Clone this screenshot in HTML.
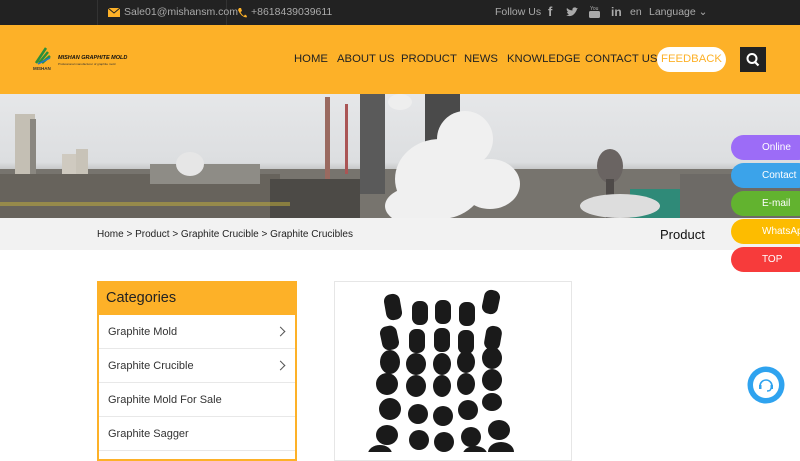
<!DOCTYPE html>
<html><head><meta charset="utf-8"><style>
*{margin:0;padding:0;box-sizing:border-box}
body{width:800px;height:450px;overflow:hidden;font-family:"Liberation Sans",Arial,sans-serif;background:#fff;position:relative}
.top{position:absolute;left:0;top:0;width:800px;height:25px;background:#222;color:#aaa;font-size:10.5px}
.top span{position:absolute;top:6px;white-space:nowrap}
.hdr{position:absolute;left:0;top:25px;width:800px;height:69px;background:#fdb128}
.nav{position:absolute;top:28px;font-size:11.3px;color:#222;white-space:nowrap}
.fb{position:absolute;left:657px;top:22px;width:69px;height:25px;border-radius:13px;background:#fff;color:#fdb128;font-size:11.3px;text-align:center;line-height:25px}
.srch{position:absolute;left:740px;top:22px;width:26px;height:25px;background:#222}
.banner{position:absolute;left:0;top:94px;width:800px;height:124px;overflow:hidden;background:linear-gradient(#e6e7e9,#dcdee0 55%,#9a9b98 72%,#6a6862)}
.bc{position:absolute;left:0;top:218px;width:800px;height:32px;background:#f2f2f2}
.cat{position:absolute;left:97px;top:281px;width:200px;height:180px;border:2px solid #fdb128;border-top:none}
.cat .h{height:34px;background:#fdb128;font-size:14.5px;color:#222;padding:9px 0 0 9px;margin:0 -2px}
.cat .i{height:34px;border-bottom:1px solid #e8e8e8;font-size:11px;color:#333;padding:11px 0 0 9px;position:relative}
.cat .i b{position:absolute;right:11px;top:13px;width:7px;height:7px;border-right:1px solid #555;border-top:1px solid #555;transform:rotate(45deg)}
.pic{position:absolute;left:334px;top:281px;width:238px;height:180px;border:1px solid #e6e6e6}
.fl{position:absolute;left:731px;width:80px;height:25px;border-radius:13px;color:#fff;font-size:10px;line-height:25px;padding-left:31px}
</style></head><body>
<div class="top">
<div style="position:absolute;left:97px;top:0;width:1px;height:25px;background:#333"></div>
<div style="position:absolute;left:226px;top:0;width:1px;height:25px;background:#333"></div>
<svg style="position:absolute;left:108px;top:8px" width="12" height="9"><rect width="12" height="9" fill="#fdb128"/><path d="M0 0L6 5L12 0" stroke="#222" fill="none"/></svg>
<span style="left:124px">Sale01@mishansm.com</span>
<svg style="position:absolute;left:237px;top:7px" width="10" height="11"><path d="M2 1L4 1L5 4L3.5 5Q5 8 7 9L8 7.5L10 9L9.5 10.5Q4 10 1 3Z" fill="#fdb128"/></svg>
<span style="left:251px">+8618439039611</span>
<span style="left:495px">Follow Us</span>
<span style="left:548px;font-weight:bold;font-size:13px;top:4px">f</span>
<svg style="position:absolute;left:566px;top:7px" width="12" height="10"><path d="M0 8Q5 11 9 6Q11 3 11 2L12 1L10.5 1.3Q10 0 8 0.5Q6 1 6.5 3.5Q3 3.3 1 1Q0 3 2 5L1 5Q1.5 7 3 7.5Q2 8.3 0 8Z" fill="#aaa"/></svg>
<svg style="position:absolute;left:589px;top:5px" width="11" height="14"><text x="1" y="5" font-size="5" fill="#aaa" font-family="Liberation Sans">You</text><rect x="0" y="6" width="11" height="7" rx="1.5" fill="#aaa"/></svg>
<span style="left:611px;font-weight:bold;font-size:12px;top:5px">in</span>
<span style="left:630px">en</span>
<span style="left:649px">Language ⌄</span>
</div>
<div class="hdr">
<svg style="position:absolute;left:33px;top:20px" width="22" height="26"><path d="M3 18L13 3M6 18L15 7M9 18L17 11" stroke="#2b8f3a" stroke-width="2.5"/><path d="M5 19L17 13" stroke="#2277cc" stroke-width="1.5"/><text x="0" y="25" font-size="4.5" fill="#333" font-family="Liberation Sans" font-weight="bold">MISHAN</text></svg>
<div style="position:absolute;left:58px;top:30px;font-size:5.5px;font-weight:bold;font-style:italic;color:#111;white-space:nowrap">MISHAN GRAPHITE MOLD</div>
<div style="position:absolute;left:58px;top:37px;font-size:3px;color:#333;white-space:nowrap">Professional manufacturer of graphite mold</div>
<span class="nav" style="left:294px">HOME</span>
<span class="nav" style="left:337px">ABOUT US</span>
<span class="nav" style="left:401px">PRODUCT</span>
<span class="nav" style="left:464px">NEWS</span>
<span class="nav" style="left:507px">KNOWLEDGE</span>
<span class="nav" style="left:585px">CONTACT US</span>
<div class="fb">FEEDBACK</div>
<div class="srch"><svg width="26" height="25"><circle cx="12" cy="11.5" r="4.5" stroke="#fff" stroke-width="2" fill="none"/><path d="M15 15L18.5 18.5" stroke="#fff" stroke-width="2.2"/></svg></div>
</div>
<div class="banner">
<svg width="800" height="124">
<g fill="#8a8780">
<rect x="0" y="75" width="800" height="49" fill="#77746e"/>
<rect x="15" y="20" width="20" height="100" fill="#c4bfb4"/><rect x="30" y="25" width="6" height="95" fill="#8a8780"/>
<rect x="62" y="60" width="14" height="60" fill="#cfcac0"/><rect x="76" y="55" width="12" height="65" fill="#c8c3b8"/>
<rect x="0" y="80" width="280" height="44" fill="#67635c"/>
<rect x="150" y="70" width="110" height="20" fill="#8e8c86"/>
<rect x="325" y="3" width="5" height="90" fill="#9a6a60"/><rect x="345" y="10" width="3" height="70" fill="#a55"/>
<rect x="270" y="85" width="90" height="39" fill="#4c4a46"/>
<rect x="360" y="0" width="25" height="100" fill="#5a5a5a"/><rect x="425" y="0" width="35" height="80" fill="#4a4a4a"/>
<ellipse cx="610" cy="72" rx="13" ry="17" fill="#6a6462"/><rect x="606" y="85" width="8" height="39" fill="#4e4a48"/>
<rect x="630" y="95" width="50" height="29" fill="#2f8a78"/><rect x="680" y="80" width="120" height="44" fill="#6d6a66"/>
<rect x="0" y="108" width="290" height="4" fill="#c6b23a" opacity=".5"/>
</g>
<g fill="#f0f0f0">
<ellipse cx="440" cy="85" rx="45" ry="40"/><ellipse cx="465" cy="45" rx="28" ry="28"/><ellipse cx="420" cy="112" rx="35" ry="20"/><ellipse cx="490" cy="90" rx="30" ry="25"/>
<ellipse cx="190" cy="70" rx="14" ry="12" fill="#e6e6e6"/><ellipse cx="620" cy="112" rx="40" ry="12" fill="#ddd"/><ellipse cx="400" cy="8" rx="12" ry="8" fill="#eee"/>
</g>
</svg>
</div>
<div class="bc">
<span style="position:absolute;left:97px;top:11px;font-size:10px;color:#222">Home &gt; Product &gt; Graphite Crucible &gt; Graphite Crucibles</span>
<span style="position:absolute;left:660px;top:9px;font-size:13px;color:#111">Product</span>
</div>
<div class="cat">
<div class="h">Categories</div>
<div class="i">Graphite Mold<b></b></div>
<div class="i">Graphite Crucible<b></b></div>
<div class="i">Graphite Mold For Sale</div>
<div class="i">Graphite Sagger</div>
</div>
<div class="pic">
<svg width="238" height="170">
<g fill="#1a1a1a">
<rect x="50" y="12" width="16" height="26" rx="7" transform="rotate(-10 58 25)"/>
<rect x="77" y="19" width="16" height="24" rx="7"/><rect x="100" y="18" width="16" height="24" rx="7"/><rect x="124" y="20" width="16" height="24" rx="7"/>
<rect x="148" y="8" width="16" height="24" rx="7" transform="rotate(12 156 20)"/>
<rect x="46" y="44" width="17" height="24" rx="7" transform="rotate(-12 54 56)"/><rect x="74" y="47" width="16" height="24" rx="7"/><rect x="99" y="46" width="16" height="24" rx="7"/><rect x="123" y="48" width="16" height="24" rx="7"/><rect x="150" y="44" width="16" height="24" rx="7" transform="rotate(10 158 56)"/>
<ellipse cx="55" cy="80" rx="10" ry="12"/><ellipse cx="81" cy="82" rx="10" ry="11"/><ellipse cx="107" cy="82" rx="9" ry="11"/><ellipse cx="131" cy="80" rx="9" ry="11"/><ellipse cx="157" cy="76" rx="10" ry="11"/>
<ellipse cx="52" cy="102" rx="11" ry="11"/><ellipse cx="81" cy="104" rx="10" ry="11"/><ellipse cx="107" cy="104" rx="9" ry="11"/><ellipse cx="131" cy="102" rx="9" ry="11"/><ellipse cx="157" cy="98" rx="10" ry="11"/>
<ellipse cx="55" cy="127" rx="11" ry="11"/><ellipse cx="83" cy="132" rx="10" ry="10"/><ellipse cx="108" cy="134" rx="10" ry="10"/><ellipse cx="133" cy="128" rx="10" ry="10"/><ellipse cx="157" cy="120" rx="10" ry="9"/>
<ellipse cx="52" cy="153" rx="11" ry="10"/><ellipse cx="84" cy="158" rx="10" ry="10"/><ellipse cx="109" cy="160" rx="10" ry="10"/><ellipse cx="136" cy="155" rx="10" ry="10"/><ellipse cx="164" cy="148" rx="11" ry="10"/>
<ellipse cx="45" cy="172" rx="12" ry="9"/><ellipse cx="140" cy="172" rx="12" ry="8"/><ellipse cx="166" cy="170" rx="13" ry="10"/>
</g></svg>
</div>
<div class="fl" style="top:135px;background:#9c6cf7">Online</div>
<div class="fl" style="top:163px;background:#3ba3ea">Contact</div>
<div class="fl" style="top:191px;background:#62b32f">E-mail</div>
<div class="fl" style="top:219px;background:#fdbc00">WhatsApp</div>
<div class="fl" style="top:247px;background:#f73b3b">TOP</div>
<svg style="position:absolute;left:747px;top:366px" width="38" height="38"><circle cx="19" cy="19" r="18.5" fill="#2fa3ef"/><circle cx="19" cy="19" r="13" fill="#fff"/><path d="M13 20a6 6 0 0 1 12 0" stroke="#2fa3ef" stroke-width="1.6" fill="none"/><path d="M24 22q0 3-4 3" stroke="#2fa3ef" stroke-width="1.4" fill="none"/><rect x="12" y="19" width="2.5" height="4" fill="#2fa3ef"/><rect x="23.5" y="19" width="2.5" height="4" fill="#2fa3ef"/></svg>
</body></html>
